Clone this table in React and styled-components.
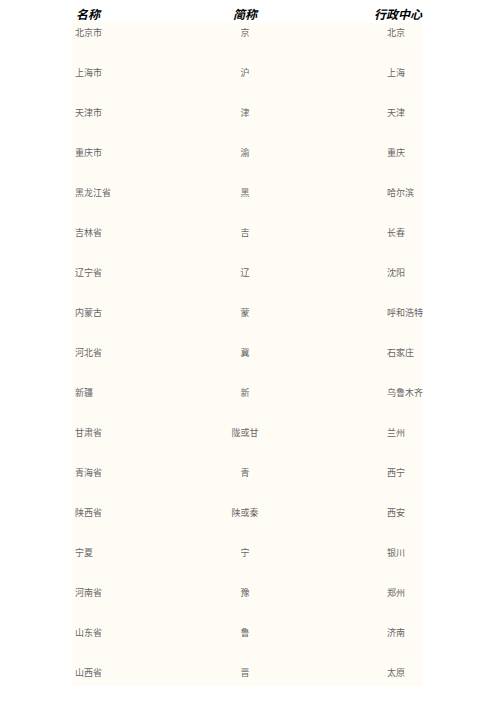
import React from "react";
import styled, { createGlobalStyle } from "styled-components";

const Global = createGlobalStyle`
  html, body { margin: 0; padding: 0; background: #ffffff; }
  body { font-family: "Liberation Serif", "Noto Sans CJK SC", serif; }
`;

const Page = styled.div`
  width: 496px;
  height: 702px;
  overflow: hidden;
  padding-left: 72px;
  box-sizing: border-box;
`;

const Grid = styled.div`
  display: grid;
  grid-template-columns: 120px 106px 124px;
  width: 350px;
`;

const HeaderRow = styled(Grid)`
  height: 23px;
  padding-top: 8px;
  box-sizing: border-box;
`;

const HeaderCell = styled.div`
  font-size: 12px;
  line-height: 15px;
  font-weight: 700;
  font-style: italic;
  color: #000;
  text-align: ${(p) => p.$align || "left"};
  padding-left: ${(p) => p.$pad || 0}px;
  white-space: nowrap;
`;

const Body = styled(Grid)`
  background: #fffcf6;
  grid-auto-rows: 23px;
  row-gap: 17px;
`;

const Cell = styled.div`
  font-size: 9px;
  line-height: 21px;
  color: #666;
  text-align: ${(p) => p.$align || "left"};
  padding-left: ${(p) => p.$pad || 0}px;
  white-space: nowrap;
`;

const rows = [
  ["北京市", "京", "北京"],
  ["上海市", "沪", "上海"],
  ["天津市", "津", "天津"],
  ["重庆市", "渝", "重庆"],
  ["黑龙江省", "黑", "哈尔滨"],
  ["吉林省", "吉", "长春"],
  ["辽宁省", "辽", "沈阳"],
  ["内蒙古", "蒙", "呼和浩特"],
  ["河北省", "冀", "石家庄"],
  ["新疆", "新", "乌鲁木齐"],
  ["甘肃省", "陇或甘", "兰州"],
  ["青海省", "青", "西宁"],
  ["陕西省", "陕或秦", "西安"],
  ["宁夏", "宁", "银川"],
  ["河南省", "豫", "郑州"],
  ["山东省", "鲁", "济南"],
  ["山西省", "晋", "太原"],
];

export default function App() {
  return (
    <>
      <Global />
      <Page>
        <HeaderRow>
          <HeaderCell $pad={4}>名称</HeaderCell>
          <HeaderCell $align="center">简称</HeaderCell>
          <HeaderCell $pad={76}>行政中心</HeaderCell>
        </HeaderRow>
        <Body>
          {rows.map(([name, abbr, center]) => (
            <React.Fragment key={name}>
              <Cell $pad={3}>{name}</Cell>
              <Cell $align="center">{abbr}</Cell>
              <Cell $pad={89}>{center}</Cell>
            </React.Fragment>
          ))}
        </Body>
      </Page>
    </>
  );
}
